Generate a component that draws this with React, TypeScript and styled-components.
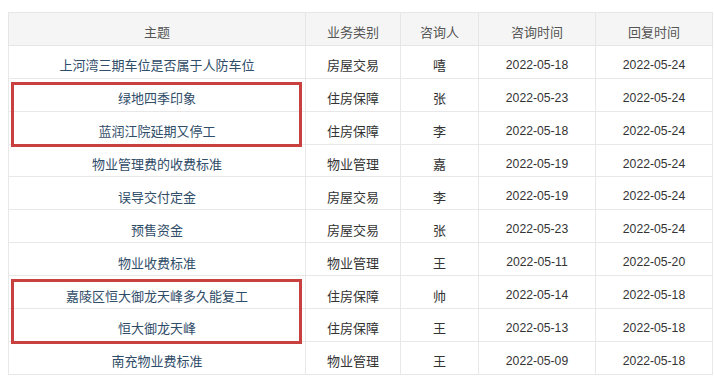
import styled, { createGlobalStyle } from "styled-components"

const GlobalStyle = createGlobalStyle`
  body {
    margin: 0;
    background: #fff;
    font-family: "Liberation Sans", "Noto Sans CJK SC", sans-serif;
  }
`

const Page = styled.div`
  padding: 12px 0 0 8px;
`

const TableWrap = styled.div`
  position: relative;
  width: 699px;
`

const Table = styled.table`
  width: 699px;
  border-collapse: collapse;
  table-layout: fixed;
  font-size: 13px;
`

const Row = styled.tr`
  height: 32.9px;
`

const HeadCell = styled.th<{ w: number }>`
  width: ${({ w }) => w}px;
  padding: 6px 0 0;
  background: #f5f5f5;
  border: 1px solid #e6e6e6;
  color: #555;
  font-weight: normal;
  text-align: center;
`

const Cell = styled.td<{ topic?: boolean; small?: boolean }>`
  padding: 6px 0 0;
  border: 1px solid #e8e8e8;
  text-align: center;
  color: ${({ topic }) => (topic ? "#2f4c68" : "#333")};
  font-size: ${({ small }) => (small ? "12.2px" : "13px")};
`

const Highlight = styled.div`
  position: absolute;
  left: 3px;
  width: 291px;
  border: 3px solid #c9413f;
  box-sizing: border-box;
  pointer-events: none;
`

const columns = [
  { title: "主题", w: 296 },
  { title: "业务类别", w: 94 },
  { title: "咨询人", w: 77 },
  { title: "咨询时间", w: 116 },
  { title: "回复时间", w: 116 },
]

const rows = [
  ["上河湾三期车位是否属于人防车位", "房屋交易", "嘻", "2022-05-18", "2022-05-24"],
  ["绿地四季印象", "住房保障", "张", "2022-05-23", "2022-05-24"],
  ["蓝润江院延期又停工", "住房保障", "李", "2022-05-18", "2022-05-24"],
  ["物业管理费的收费标准", "物业管理", "嘉", "2022-05-19", "2022-05-24"],
  ["误导交付定金", "房屋交易", "李", "2022-05-19", "2022-05-24"],
  ["预售资金", "房屋交易", "张", "2022-05-23", "2022-05-24"],
  ["物业收费标准", "物业管理", "王", "2022-05-11", "2022-05-20"],
  ["嘉陵区恒大御龙天峰多久能复工", "住房保障", "帅", "2022-05-14", "2022-05-18"],
  ["恒大御龙天峰", "住房保障", "王", "2022-05-13", "2022-05-18"],
  ["南充物业费标准", "物业管理", "王", "2022-05-09", "2022-05-18"],
]

// rows wrapped by a red frame: [first row, count]
const marks = [
  [1, 2],
  [7, 2],
]

const ROW_H = 32.9

export default function App() {
  return (
    <Page>
      <GlobalStyle />
      <TableWrap>
        <Table>
          <thead>
            <Row>
              {columns.map((c) => (
                <HeadCell key={c.title} w={c.w}>{c.title}</HeadCell>
              ))}
            </Row>
          </thead>
          <tbody>
            {rows.map((r, i) => (
              <Row key={i}>
                {r.map((v, j) => (
                  <Cell key={j} topic={j === 0} small={j > 2}>{v}</Cell>
                ))}
              </Row>
            ))}
          </tbody>
        </Table>
        {marks.map(([start, count]) => (
          <Highlight
            key={start}
            style={{ top: ROW_H * (start + 1) + 4, height: ROW_H * count - 1 }}
          />
        ))}
      </TableWrap>
    </Page>
  )
}
